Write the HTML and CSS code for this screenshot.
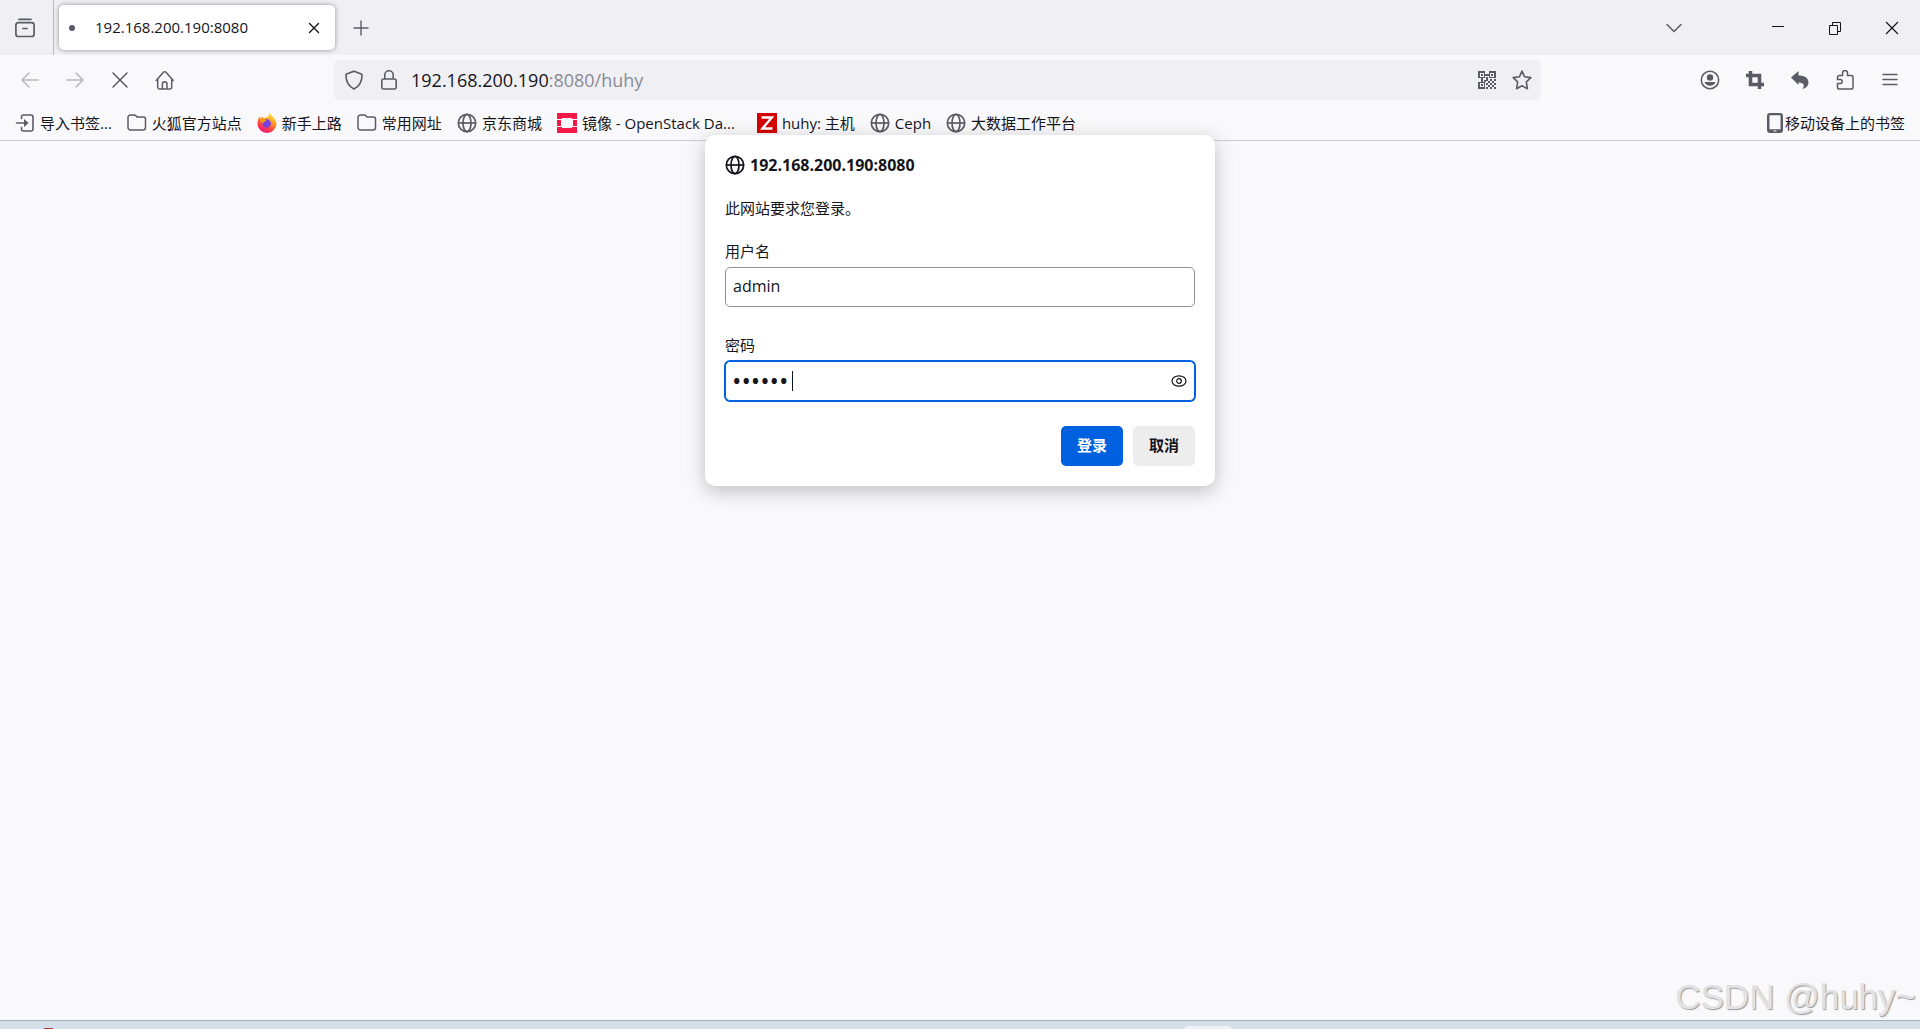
FILE: index.html
```html
<!DOCTYPE html>
<html lang="zh-CN">
<head>
<meta charset="utf-8">
<title>192.168.200.190:8080</title>
<link rel="stylesheet" href="styles.css">
</head>
<body>
<svg class="defs" aria-hidden="true">
  <symbol id="globe" viewBox="0 0 20 20"><g fill="none" stroke="currentColor" stroke-width="1.700"><circle cx="10" cy="10" r="8.700"/><ellipse cx="10" cy="10" rx="4" ry="8.700"/><path d="M1.500 10h17"/></g></symbol>
  <symbol id="folder" viewBox="0 0 20 20"><path d="M3.500 2h3.800c.6 0 1 .2 1.400.6l1.300 1.400h6.500a2 2 0 0 1 2 2v8.500a2.500 2.500 0 0 1-2.500 2.500H3.500A2.500 2.500 0 0 1 1 14.500v-10A2.500 2.500 0 0 1 3.500 2z" fill="none" stroke="currentColor" stroke-width="1.500"/></symbol>
</svg>
<header class="chrome">
  <div class="tabbar">
    <button class="view" aria-label="View"><svg viewBox="0 0 20 20"><g fill="none" stroke="currentColor" stroke-width="1.700" stroke-linecap="round"><path d="M4 1.300h12"/><rect x=".9" y="4.700" width="18.200" height="13.800" rx="2.500"/><path d="M8 10.500h4"/></g></svg></button>
    <div class="tab"><span class="dot"></span><span class="tabname">192.168.200.190:8080</span><button class="tabclose" aria-label="关闭标签页"><svg viewBox="0 0 20 20"><path d="M5.500 5.500l9 9m0-9l-9 9" stroke="currentColor" stroke-width="1.400" stroke-linecap="round"/></svg></button></div>
    <button class="tool" aria-label="新标签页"><svg viewBox="0 0 20 20"><path d="M10 3v14M3 10h14" stroke="currentColor" stroke-width="1.400" stroke-linecap="round"/></svg></button>
    <div class="winctl">
      <button class="tool chevron" aria-label="列出标签页"><svg viewBox="0 0 20 20"><path d="M3 6.500l7 7 7-7" fill="none" stroke="currentColor" stroke-width="1.500" stroke-linecap="round"/></svg></button>
      <button class="win" aria-label="最小化"><svg viewBox="0 0 20 20"><path d="M4 8.500h12" stroke="currentColor"/></svg></button>
      <button class="win" aria-label="还原"><svg viewBox="0 0 20 20"><path d="M4.500 7.500h8v9h-8zM7.500 7V4.500h8v9H13" fill="none" stroke="currentColor"/></svg></button>
      <button class="win" aria-label="关闭"><svg viewBox="0 0 20 20"><path d="M4 4l12 12m0-12L4 16" stroke="currentColor" stroke-width="1.200"/></svg></button>
    </div>
  </div>
  <div class="navbar">
    <div class="navgroup">
      <button class="tool" disabled aria-label="后退"><svg viewBox="0 0 20 20"><path d="M18.500 10H2m7-7l-7 7 7 7" fill="none" stroke="currentColor" stroke-width="1.500" stroke-linecap="round"/></svg></button>
      <button class="tool" disabled aria-label="前进"><svg viewBox="0 0 20 20"><path d="M1.500 10H18m-7-7l7 7-7 7" fill="none" stroke="currentColor" stroke-width="1.500" stroke-linecap="round"/></svg></button>
      <button class="tool" aria-label="停止"><svg viewBox="0 0 20 20"><path d="M3 3l14 14M17 3L3 17" stroke="currentColor" stroke-width="1.500" stroke-linecap="round"/></svg></button>
      <button class="tool" aria-label="主页"><svg viewBox="0 0 20 20"><path d="M1.200 10.500L8.400 2.200a1.800 1.800 0 0 1 2.600 0l7.200 8.300M2.700 9v8a2 2 0 0 0 2 2h10a2 2 0 0 0 2-2V9M7.400 19v-5a2.300 2.300 0 0 1 4.600 0v5" fill="none" stroke="currentColor" stroke-width="1.500" stroke-linecap="round"/></svg></button>
    </div>
    <div class="urlbar">
      <button class="urlicon" aria-label="跟踪保护"><svg viewBox="0 0 20 20"><path d="M10 1.200l7.300 2.700a1.200 1.200 0 0 1 .8 1.200C18 11 15.500 16.500 10 19 4.500 16.500 2 11 1.900 5.100a1.200 1.200 0 0 1 .8-1.200z" fill="none" stroke="currentColor" stroke-width="1.600"/></svg></button>
      <button class="urlicon" aria-label="连接信息"><svg viewBox="0 0 20 20"><g fill="none" stroke="currentColor" stroke-width="1.600"><rect x="2.800" y="9" width="14.400" height="10" rx="2"/><path d="M5.800 9V5a4.200 4.200 0 0 1 8.400 0v4"/></g></svg></button>
      <div class="url">192.168.200.190<span>:8080/huhy</span></div>
      <button class="urlicon" aria-label="二维码"><svg viewBox="0 0 20 20" shape-rendering="crispEdges"><path fill="none" stroke="currentColor" stroke-width="1.600" d="M2 2h5.500v5.500H2zM12.500 2H18v5.500h-5.500zM2 12.500h5.500V18H2z"/><path fill="currentColor" d="M4 4h2v2H4zM14 4h2v2h-2zM4 14h2v2H4zM8 4h4v2H8zM4 8h2v4H4zM9 7h2v2H9zM7 10h2v2H7zM9 9h2v2H9zM13 9h2v2h-2zM17 9h2v2h-2zM11 11h2v2h-2zM15 11h2v2h-2zM9 13h2v2H9zM13 13h2v2h-2zM17 13h2v2h-2zM11 15h2v2h-2zM15 15h2v2h-2zM9 17h2v2H9zM13 17h2v2h-2zM17 17h2v2h-2z"/></svg></button>
      <button class="urlicon" aria-label="加入书签"><svg viewBox="0 0 20 20"><path d="M10 1.200l2.600 5.600 6.200.8-4.500 4.300 1.100 6.800-5.400-3-5.400 3 1.100-6.800L1.200 7.600l6.200-.8z" fill="none" stroke="currentColor" stroke-width="1.600" stroke-linejoin="round"/></svg></button>
    </div>
    <div class="navgroup end">
      <button class="tool" aria-label="账户"><svg viewBox="0 0 20 20"><circle cx="10" cy="10" r="8.700" fill="none" stroke="currentColor" stroke-width="1.500"/><circle cx="10" cy="7.500" r="3.200" fill="currentColor"/><path d="M4.500 12h11c-.8 2.500-3 3.700-5.500 3.700S5.300 14.500 4.500 12z" fill="currentColor"/></svg></button>
      <button class="tool" aria-label="截图"><svg viewBox="0 0 20 20"><path d="M5.500 1v13.500H19M1 5.500h13.500V19" fill="none" stroke="currentColor" stroke-width="3.600"/></svg></button>
      <button class="tool" aria-label="撤销"><svg viewBox="0 0 20 20"><path d="M8.500 1v4.500c6 0 10 2.500 10 7 0 3-2 5.300-6 6.500 2.500-3.500 1.500-6.500-4-6.500V15L1 7.500z" fill="currentColor"/></svg></button>
      <button class="tool" aria-label="扩展"><svg viewBox="0 0 20 20"><path d="M7.500 5.500V3a2.500 2.500 0 0 1 5 0v2.500h3.700c1 0 1.800.8 1.800 1.800v9.900c0 1-.8 1.800-1.800 1.800H4.300c-1 0-1.800-.8-1.800-1.800v-3.700h2.700a2 2 0 0 0 0-4H2.500V7.300c0-1 .8-1.800 1.800-1.800z" fill="none" stroke="currentColor" stroke-width="1.500"/></svg></button>
      <button class="tool" aria-label="菜单"><svg viewBox="0 0 20 20"><path d="M3 4.500h14M3 9.500h14M3 14.500h14" stroke="currentColor" stroke-width="1.400" stroke-linecap="round"/></svg></button>
    </div>
  </div>
  <nav class="bookmarks">
    <a href="#"><svg viewBox="0 0 20 20"><path d="M6.500 5.500V4a2 2 0 0 1 2-2H16a2 2 0 0 1 2 2v12a2 2 0 0 1-2 2H8.500a2 2 0 0 1-2-2v-1.500M1.500 10h9" fill="none" stroke="currentColor" stroke-width="1.600" stroke-linecap="round"/><path d="M9 6l4.500 4L9 14z" fill="currentColor"/></svg>导入书签...</a>
    <a href="#"><svg><use href="#folder"/></svg>火狐官方站点</a>
    <a href="#"><svg viewBox="0 0 20 20"><defs><linearGradient id="fox" x1=".8" y1="0" x2=".3" y2="1"><stop offset="0" stop-color="#fff44f"/><stop offset=".4" stop-color="#ff9a1f"/><stop offset=".75" stop-color="#ff3750"/><stop offset="1" stop-color="#e31587"/></linearGradient></defs><path d="M13.500 0c.3 2 1.500 3 2.800 4.300 1.900 1.800 3.200 3.800 3.200 6.700a9.500 9 0 0 1-19 0c0-3 .8-5.500 2.200-7.500L4 6l1-2.500L6.500 5c2 0 3-.5 4.500-1 .3-1.500 1-3 2.500-4z" fill="url(#fox)"/><circle cx="9.700" cy="10.500" r="4.200" fill="#7543e3"/><path d="M3 6.500c2-1.500 5-1.200 6.500 1.500-2 .2-2.700 1-3 2-2.500-.5-3.500-1.500-3.500-3.500z" fill="#ff980e"/></svg>新手上路</a>
    <a href="#"><svg><use href="#folder"/></svg>常用网址</a>
    <a href="#"><svg><use href="#globe"/></svg>京东商城</a>
    <a href="#" class="long"><svg viewBox="0 0 20 20" shape-rendering="crispEdges"><path fill="#f5194a" d="M0 0h20v6h-5V5H5v1H0zM0 14h5v1h10v-1h5v6H0zM0 7h4v6H0zM16 7h4v6h-4z"/></svg>镜像 - OpenStack Da...</a>
    <a href="#"><svg viewBox="0 0 20 20"><path fill="#d40000" d="M0 0h20v20H0z"/><path d="M4.500 4.500h10.300L5.500 15.500h10" fill="none" stroke="#fff" stroke-width="2.400"/></svg>huhy: 主机</a>
    <a href="#"><svg><use href="#globe"/></svg>Ceph</a>
    <a href="#"><svg><use href="#globe"/></svg>大数据工作平台</a>
    <a href="#" class="mobile"><svg viewBox="0 0 20 20"><path fill="currentColor" fill-rule="evenodd" d="M5 0h10a3 3 0 0 1 3 3v14a3 3 0 0 1-3 3H5a3 3 0 0 1-3-3V3a3 3 0 0 1 3-3zM4.500 2.300v14h11v-14zM8.500 17.500v1h3v-1z"/></svg>移动设备上的书签</a>
  </nav>
</header>
<main class="page">
  <form class="dialog">
    <h1><svg><use href="#globe"/></svg>192.168.200.190:8080</h1>
    <p>此网站要求您登录。</p>
    <label for="user">用户名</label>
    <input id="user" type="text" value="admin">
    <label for="pass">密码</label>
    <div class="passbox"><input id="pass" type="password" value="123456"><span class="caret"></span><button type="button" class="eye" aria-label="显示密码"><svg viewBox="0 0 16 16"><g fill="none" stroke="currentColor" stroke-width="1.200"><ellipse cx="8" cy="8" rx="7" ry="5.200"/><circle cx="8" cy="8" r="2.300"/></g></svg></button></div>
    <div class="actions"><button class="btn primary">登录</button><button type="button" class="btn">取消</button></div>
  </form>
  <div class="watermark">CSDN @huhy~</div>
</main>
<footer class="taskbar"><span class="redapp"></span><span class="activeapp"></span></footer>
</body>
</html>
```
FILE: styles.css
```css
* { box-sizing: border-box; }
body {
  margin: 0;
  min-height: 100vh;
  display: flex;
  flex-direction: column;
  background: #f9f9fb;
  color: #15141a;
  font: 15px/20px "Open Sans", "Noto Sans CJK SC", sans-serif;
}
button { border: 0; padding: 0; background: none; color: inherit; font: inherit; display: flex; align-items: center; justify-content: center; flex: none; }
svg { width: 20px; height: 20px; flex: none; display: block; }
.defs { position: absolute; width: 0; height: 0; }
.chrome { border-bottom: 1px solid #cccccf; color: #5b5b66; }

.tabbar { display: flex; align-items: center; height: 55px; background: #f0f0f4; }
.view { width: 54px; height: 55px; padding-right: 4px; border-right: 1px solid #b8b8bf; }
.tab { display: flex; align-items: center; width: 276px; height: 45px; margin: 0 6px 0 5px; padding: 0 11px 0 10px; border-radius: 5px; background: #fff; color: #15141a; box-shadow: 0 0 5px rgba(0, 0, 0, .4); }
.dot { width: 6px; height: 6px; border-radius: 50%; background: #5b5b66; }
.tabname { flex: 1; padding: 0 0 2px 20px; }
.tabclose { width: 20px; height: 20px; }
.winctl { display: flex; align-items: center; margin-left: auto; }
.tool { width: 40px; height: 40px; }
.tool:disabled { color: #b9b9bf; }
.chevron { margin-right: 55px; }
.win { width: 57px; height: 55px; color: #15141a; }

.navbar { display: flex; align-items: center; height: 50px; padding: 0 10px; }
.navgroup { display: flex; gap: 5px; flex: 0 0 324px; }
.end { flex-basis: 369px; justify-content: flex-end; }
.urlbar { display: flex; align-items: center; gap: 5px; flex: 1; height: 40px; padding: 0 4px 0 5px; border-radius: 5px; background: #f0f0f4; }
.urlicon { width: 30px; height: 30px; }
.url { flex: 1; padding-left: 2px; color: #15141a; font-size: 18px; }
.url span { color: #8a8a92; }

.bookmarks { display: flex; align-items: center; gap: 15px; height: 35px; padding: 0 15px; }
.bookmarks a { display: flex; align-items: center; gap: 5px; color: #15141a; text-decoration: none; white-space: nowrap; }
.bookmarks svg { color: #5b5b66; }
.bookmarks .long { width: 185px; }
.bookmarks .mobile { margin-left: auto; gap: 0; }

.page { flex: 1; position: relative; }
.dialog { position: absolute; top: -6px; left: 50%; width: 510px; margin-left: -255px; padding: 20px; border-radius: 10px; background: #fff; box-shadow: 0 5px 20px rgba(0, 0, 0, .24); display: flex; flex-direction: column; }
.dialog h1 { display: flex; align-items: center; gap: 5px; margin: 0 0 23px; font-size: 16px; line-height: 20px; }
.dialog p { margin: 0 0 23px; }
.dialog label { margin-bottom: 6px; }
.dialog input { width: 100%; height: 40px; padding: 0 7px 2px; border: 1px solid #8f8f9d; border-radius: 5px; background: #fff; color: #15141a; font: inherit; font-size: 16px; outline: 0; }
#user { margin-bottom: 28px; }
.passbox { position: relative; }
.dialog #pass { padding-left: 6px; border-color: #0061e0; box-shadow: 0 0 0 1px #0061e0; font-size: 25px; }
.caret { position: absolute; left: 67px; top: 10px; width: 1px; height: 20px; background: #15141a; }
.eye { position: absolute; right: 8px; top: 12px; width: 16px; height: 16px; }
.eye svg { width: 16px; height: 16px; }
.actions { display: flex; justify-content: flex-end; gap: 10px; margin-top: 25px; }
.btn { height: 40px; padding: 0 16px 2px; border-radius: 5px; background: #ededed; font-weight: 700; }
.primary { background: #0061e0; color: #fff; }

.watermark { position: absolute; right: 4px; bottom: 3px; color: #e2e2e4; font: 35px/40px "Liberation Sans", sans-serif; text-shadow: 1px 1px 1px #999; }
.taskbar { position: relative; height: 9px; border-top: 1px solid #a9adb5; background: #d5dfe9; overflow: hidden; }
.redapp { position: absolute; left: 44px; top: 7px; width: 9px; height: 2px; background: #b23a3a; }
.activeapp { position: absolute; left: 1184px; top: 5px; width: 48px; height: 10px; border-radius: 4px; background: #edf2f7; }
```
